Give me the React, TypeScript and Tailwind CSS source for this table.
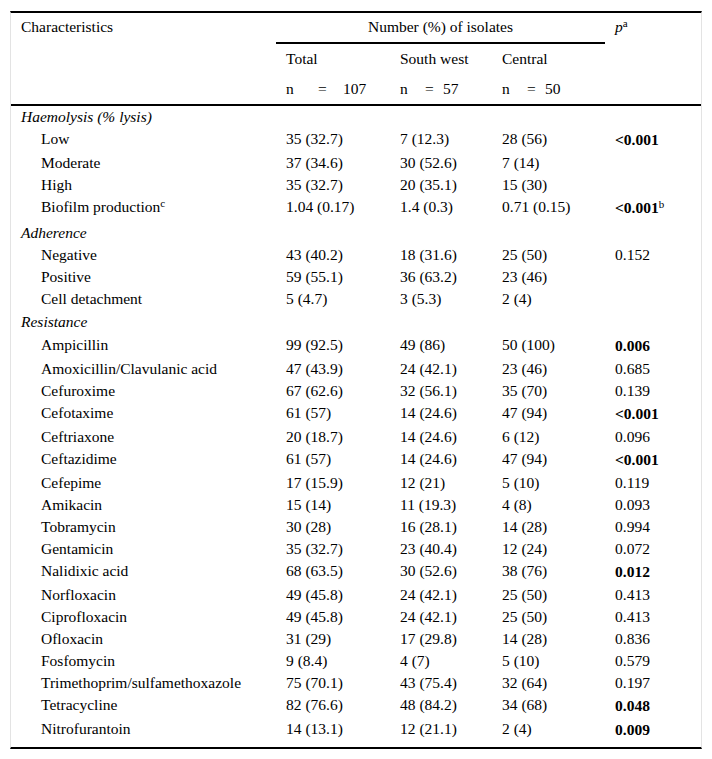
type Row = {
  label: string
  sup?: string
  total?: string
  sw?: string
  central?: string
  p?: string
  pSup?: string
  bold?: boolean
  section?: boolean
  h?: string
}

const rows: Row[] = [
  { label: "Haemolysis (% lysis)", section: true },
  { label: "Low", total: "35 (32.7)", sw: "7 (12.3)", central: "28 (56)", p: "<0.001", bold: true },
  { label: "Moderate", total: "37 (34.6)", sw: "30 (52.6)", central: "7 (14)" },
  { label: "High", total: "35 (32.7)", sw: "20 (35.1)", central: "15 (30)" },
  { label: "Biofilm production", sup: "c", total: "1.04 (0.17)", sw: "1.4 (0.3)", central: "0.71 (0.15)", p: "<0.001", pSup: "b", bold: true, h: "h-[26px]" },
  { label: "Adherence", section: true },
  { label: "Negative", total: "43 (40.2)", sw: "18 (31.6)", central: "25 (50)", p: "0.152" },
  { label: "Positive", total: "59 (55.1)", sw: "36 (63.2)", central: "23 (46)" },
  { label: "Cell detachment", total: "5 (4.7)", sw: "3 (5.3)", central: "2 (4)" },
  { label: "Resistance", section: true, h: "h-[24px] pt-[1px]" },
  { label: "Ampicillin", total: "99 (92.5)", sw: "49 (86)", central: "50 (100)", p: "0.006", bold: true },
  { label: "Amoxicillin/Clavulanic acid", total: "47 (43.9)", sw: "24 (42.1)", central: "23 (46)", p: "0.685" },
  { label: "Cefuroxime", total: "67 (62.6)", sw: "32 (56.1)", central: "35 (70)", p: "0.139" },
  { label: "Cefotaxime", total: "61 (57)", sw: "14 (24.6)", central: "47 (94)", p: "<0.001", bold: true },
  { label: "Ceftriaxone", total: "20 (18.7)", sw: "14 (24.6)", central: "6 (12)", p: "0.096" },
  { label: "Ceftazidime", total: "61 (57)", sw: "14 (24.6)", central: "47 (94)", p: "<0.001", bold: true },
  { label: "Cefepime", total: "17 (15.9)", sw: "12 (21)", central: "5 (10)", p: "0.119" },
  { label: "Amikacin", total: "15 (14)", sw: "11 (19.3)", central: "4 (8)", p: "0.093" },
  { label: "Tobramycin", total: "30 (28)", sw: "16 (28.1)", central: "14 (28)", p: "0.994" },
  { label: "Gentamicin", total: "35 (32.7)", sw: "23 (40.4)", central: "12 (24)", p: "0.072" },
  { label: "Nalidixic acid", total: "68 (63.5)", sw: "30 (52.6)", central: "38 (76)", p: "0.012", bold: true },
  { label: "Norfloxacin", total: "49 (45.8)", sw: "24 (42.1)", central: "25 (50)", p: "0.413" },
  { label: "Ciprofloxacin", total: "49 (45.8)", sw: "24 (42.1)", central: "25 (50)", p: "0.413" },
  { label: "Ofloxacin", total: "31 (29)", sw: "17 (29.8)", central: "14 (28)", p: "0.836" },
  { label: "Fosfomycin", total: "9 (8.4)", sw: "4 (7)", central: "5 (10)", p: "0.579" },
  { label: "Trimethoprim/sulfamethoxazole", total: "75 (70.1)", sw: "43 (75.4)", central: "32 (64)", p: "0.197" },
  { label: "Tetracycline", total: "82 (76.6)", sw: "48 (84.2)", central: "34 (68)", p: "0.048", bold: true },
  { label: "Nitrofurantoin", total: "14 (13.1)", sw: "12 (21.1)", central: "2 (4)", p: "0.009", bold: true },
]

const cols = "grid grid-cols-[265px_114px_102px_113px_96px]"

const NCount = ({ n, eqW, nW }: { n: string; nW: string; eqW: string }) => (
  <span className="whitespace-nowrap">
    <span className={`inline-block ${nW}`}>n</span>
    <span className={`inline-block ${eqW}`}>=</span>
    <span>{n}</span>
  </span>
)

const App = () => {
  return (
    <div className="min-h-[759px] bg-white pt-[11px] pl-[10px] font-['Liberation_Serif',serif] text-[15.5px] text-black">
      <div className="w-[692px] border-t-2 border-b-2 border-black border-l border-r border-l-[#e3e3e3] border-r-[#e3e3e3] pb-[5px]">
        {/* header */}
        <div className="border-b-2 border-black">
          <div className={cols}>
            <div className="pl-[10px] pt-[3px] leading-[22px]">Characteristics</div>
            <div className="col-span-3 h-[31px] border-b-2 border-black pt-[3px] text-center leading-[22px]">
              Number (%) of isolates
            </div>
            <div className="pl-[10px] pt-[3px] leading-[22px]">
              <i>p</i>
              <sup className="text-[11px]">a</sup>
            </div>
          </div>
          <div className={`${cols} h-[30px] pt-[4px] leading-[22px]`}>
            <div />
            <div className="pl-[10px]">Total</div>
            <div className="pl-[10px]">South west</div>
            <div className="pl-[10px]">Central</div>
            <div />
          </div>
          <div className={`${cols} h-[30px] pt-[4px] leading-[22px]`}>
            <div />
            <div className="pl-[10px]">
              <NCount n="107" nW="w-[32px]" eqW="w-[25px]" />
            </div>
            <div className="pl-[10px]">
              <NCount n="57" nW="w-[25px]" eqW="w-[18px]" />
            </div>
            <div className="pl-[10px]">
              <NCount n="50" nW="w-[25px]" eqW="w-[18px]" />
            </div>
            <div />
          </div>
        </div>

        {/* body */}
        {rows.map((r) =>
          r.section ? (
            <div key={r.label} className={`pl-[10px] italic leading-[22px] ${r.h ?? "h-[22px]"}`}>
              {r.label}
            </div>
          ) : (
            <div key={r.label} className={`${cols} items-start leading-[22px] ${r.h ?? (r.bold ? "h-[24px]" : "h-[22px]")}`}>
              <div className="pl-[30px] whitespace-nowrap">
                {r.label}
                {r.sup && <sup className="text-[11px]">{r.sup}</sup>}
              </div>
              <div className="pl-[10px]">{r.total}</div>
              <div className="pl-[10px]">{r.sw}</div>
              <div className="pl-[10px]">{r.central}</div>
              <div className={`pl-[10px] ${r.bold ? "font-bold leading-[24px]" : ""}`}>
                {r.p}
                {r.pSup && <sup className="text-[11px] font-normal">{r.pSup}</sup>}
              </div>
            </div>
          )
        )}
      </div>
    </div>
  )
}

export default App
